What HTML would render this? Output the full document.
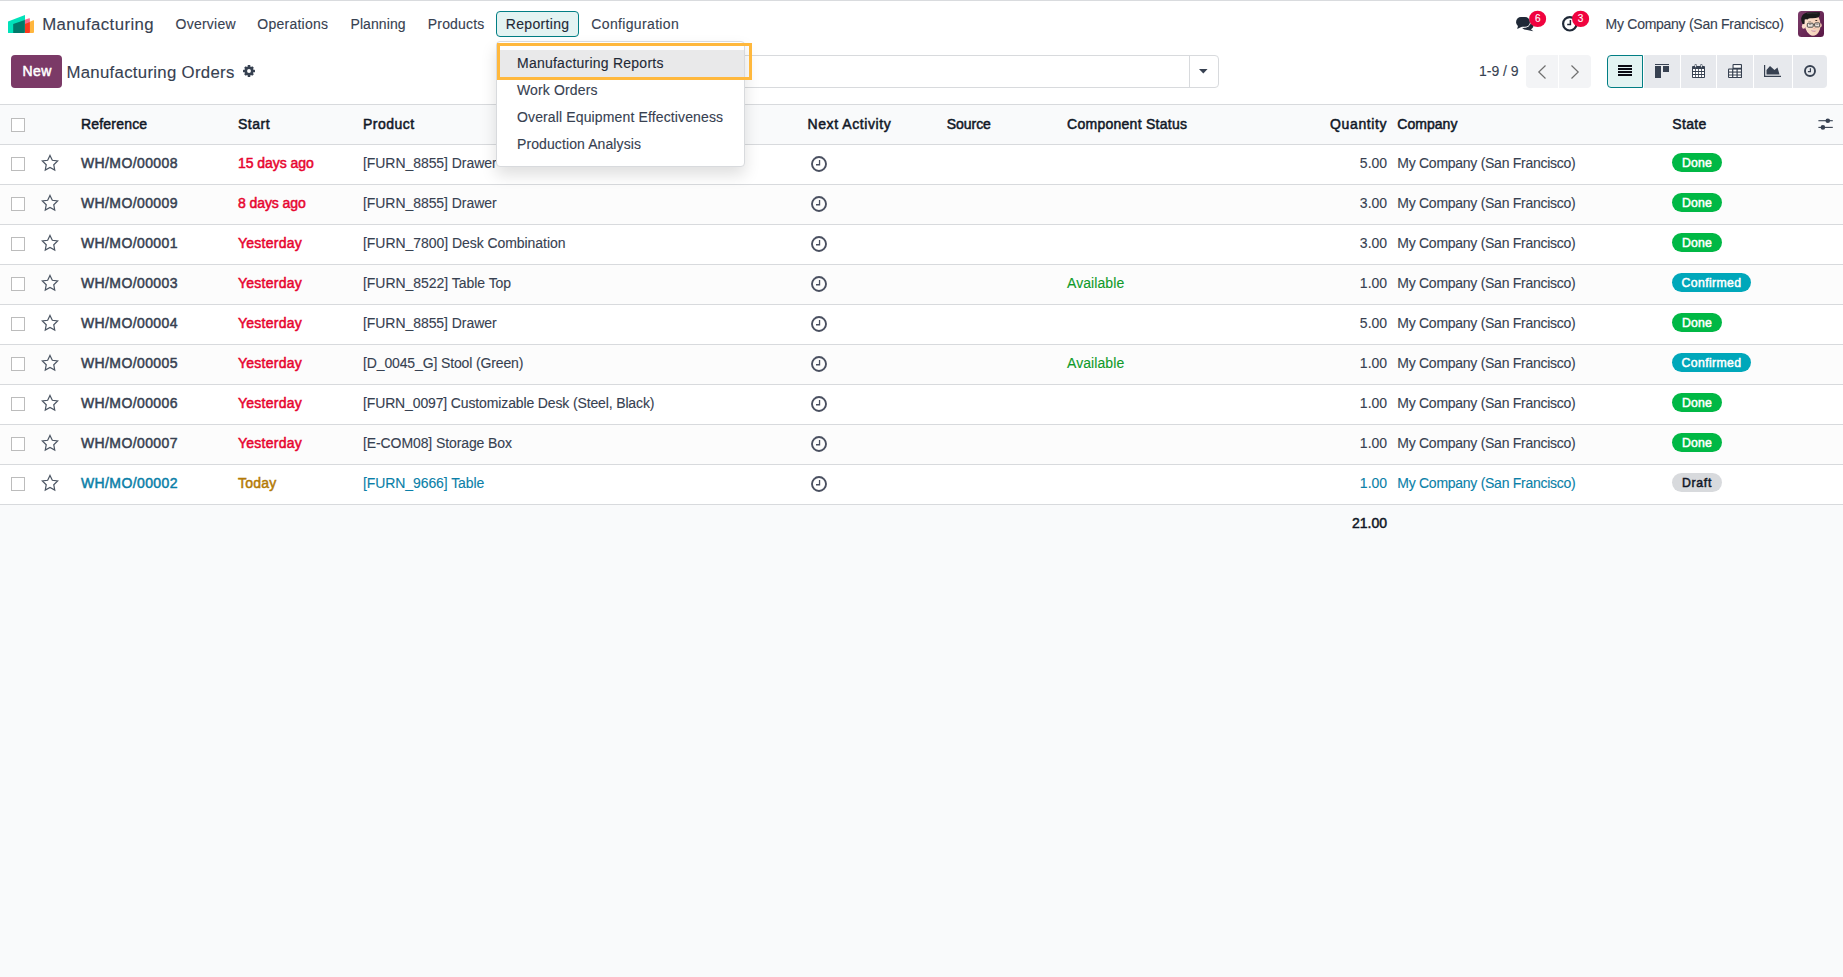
<!DOCTYPE html>
<html lang="en"><head><meta charset="utf-8"><title>Odoo - Manufacturing Orders</title>
<style>
*{box-sizing:border-box;margin:0;padding:0}
html,body{width:1843px;height:977px;overflow:hidden}
body{position:relative;background:#f9fafb;font-family:"Liberation Sans",sans-serif;font-size:14px;color:#374151}
.a{position:absolute}
.t{position:absolute;white-space:pre;line-height:1;z-index:5}
#top{left:0;top:0;width:1843px;height:104px;background:#fff}
#topline{left:0;top:0;width:1843px;height:1px;background:#d9dbde}
#cpline{left:0;top:104px;width:1843px;height:1px;background:#d8dadd}
.row{left:0;width:1843px;height:40px;border-bottom:1px solid #d8dadd;background:#fff}
.row.alt{background:#fcfcfc}
.row.head{background:#f9fafb}
.cb{left:11px;width:14px;height:14px;border:1px solid #bcbcbc;background:#fff}
.badge{left:1672px;height:19px;border-radius:10px}
.done{width:50px;background:#00b845}
.conf{width:79px;background:#00a7ba}
.draft{width:50px;background:#d8dadd}
#new{left:11px;top:55px;width:51px;height:33px;border-radius:4px;background:#7b3a67}
#rep{left:496px;top:11px;width:83px;height:26px;border:1px solid #017e84;border-radius:4px;background:#e3f3f2}
#search{left:620px;top:55px;width:599px;height:33px;border:1px solid #d8dadd;border-radius:4px;background:#fff}
#searchsep{left:1189px;top:56px;width:1px;height:31px;background:#d8dadd}
#dd{left:496px;top:41px;width:249px;height:126px;background:#fff;border:1px solid #d8dadd;border-radius:4px;box-shadow:0 8px 16px rgba(0,0,0,.13);z-index:20}
#ddsel{left:497px;top:50px;width:247px;height:27px;background:#e9e9ea;z-index:21}
#ddhl{left:497px;top:43px;width:255px;height:37px;border:3px solid #ffb83d;z-index:25}
.pg{top:55px;height:33px;background:#f3f4f6}
.vb{top:55px;height:33px;background:#e7e9ed}
#vb1{left:1607px;width:36px;background:#e3f3f2;border:1px solid #017e84;border-radius:4px 0 0 4px}
.bdg{width:17px;height:17px;border-radius:50%;background:#f0033f;top:10.5px}
svg{position:absolute;overflow:visible}

</style></head>
<body>
<div class="a" id="top"></div><div class="a" id="topline"></div><div class="a" id="cpline"></div>
<svg style="left:8px;top:15px" width="26" height="18" viewBox="0 0 26 18"><path d="M0 6.6L17 0V18H.6Q0 18 0 17.4Z" fill="#02e2ba"/><path d="M16.8 4.7L21.2 3.2Q21.9 3 21.9 3.8V18H16.8Z" fill="#fc6b8f"/><path d="M21.9 6.7L25.3 5.3Q26 5 26 5.8V17Q26 18 25 18H21.9Z" fill="#ffb63d"/><path d="M16.8 9L21.9 7V17Q21.9 18 20.9 18H16.8Z" fill="#fc391d"/><path d="M5.2 8.9L16.8 5V16.8Q16.8 18 15.6 18H5.2Z" fill="#01796a"/></svg>
<div class="a" id="rep"></div>
<div class="a" id="new"></div>
<svg style="left:243px;top:65px" width="12" height="12" viewBox="0 0 12 12"><g fill="#374151"><circle cx="6" cy="6" r="4.55"/><rect x="4.7" y="0" width="2.6" height="12" rx=".5"/><rect x="4.7" y="0.3" width="2.6" height="11.4" rx=".5" transform="rotate(45 6 6)"/><rect x="4.7" y="0" width="2.6" height="12" rx=".5" transform="rotate(90 6 6)"/><rect x="4.7" y="0.3" width="2.6" height="11.4" rx=".5" transform="rotate(135 6 6)"/></g><circle cx="6" cy="6" r="1.95" fill="#fff"/></svg>
<div class="a" id="search"></div><div class="a" id="searchsep"></div>
<svg style="left:1199.4px;top:69px" width="8.6" height="4.6" viewBox="0 0 8.6 4.6"><polygon points="0,0 8.6,0 4.3,4.6" fill="#374151"/></svg>
<div class="a pg" style="left:1526px;width:32px;border-radius:4px 0 0 4px"></div><div class="a pg" style="left:1559px;width:32px;border-radius:0 4px 4px 0"></div>
<svg style="left:1538px;top:65px" width="8" height="14" viewBox="0 0 8 14"><polyline points="7.5,0.5 0.8,7 7.5,13.5" fill="none" stroke="#6f6f6f" stroke-width="1.2"/></svg>
<svg style="left:1571px;top:65px" width="8" height="14" viewBox="0 0 8 14"><polyline points="0.5,0.5 7.2,7 0.5,13.5" fill="none" stroke="#6f6f6f" stroke-width="1.2"/></svg>
<div class="a vb" id="vb1"></div>
<div class="a vb" style="left:1644px;width:36px;"></div>
<div class="a vb" style="left:1681px;width:35px;"></div>
<div class="a vb" style="left:1717px;width:36px;"></div>
<div class="a vb" style="left:1754px;width:38px;"></div>
<div class="a vb" style="left:1793px;width:34px;border-radius:0 4px 4px 0;"></div>
<svg style="left:1618px;top:65px" width="14" height="11" viewBox="0 0 14 11"><g fill="#0b0b14"><rect y="0" width="14" height="2"/><rect y="3" width="14" height="2"/><rect y="6" width="14" height="2"/><rect y="9" width="14" height="2"/></g></svg>
<svg style="left:1655px;top:64px" width="14" height="14" viewBox="0 0 14 14"><g fill="#374151"><rect y="0" width="14" height="1"/><rect y="2" width="6" height="12"/><rect x="8" y="2" width="6" height="6"/></g></svg>
<svg style="left:1692px;top:64px" width="13" height="14" viewBox="0 0 13 14"><g fill="#374151"><rect x="0" y="2" width="13" height="12" rx="1"/><rect x="2.6" y="0" width="2" height="4" rx="1"/><rect x="8.4" y="0" width="2" height="4" rx="1"/></g><g fill="#fff"><rect x="1" y="5" width="2.2" height="2"/><rect x="4" y="5" width="2.2" height="2"/><rect x="7" y="5" width="2.2" height="2"/><rect x="10" y="5" width="2" height="2"/><rect x="1" y="8" width="2.2" height="2"/><rect x="4" y="8" width="2.2" height="2"/><rect x="7" y="8" width="2.2" height="2"/><rect x="10" y="8" width="2" height="2"/><rect x="1" y="11" width="2.2" height="2"/><rect x="4" y="11" width="2.2" height="2"/><rect x="7" y="11" width="2.2" height="2"/><rect x="10" y="11" width="2" height="2"/></g><g fill="#e7e9ed"><rect x="3.1" y="0.6" width="1" height="2.6" rx=".5"/><rect x="8.9" y="0.6" width="1" height="2.6" rx=".5"/></g></svg>
<svg style="left:1728px;top:64px" width="14" height="14" viewBox="0 0 14 14"><g fill="#374151"><rect x="4.5" y="0" width="9.5" height="14" rx="1"/><rect x="0" y="4.5" width="14" height="9.5" rx="1"/></g><g fill="#fff"><rect x="5.6" y="1.1" width="7.3" height="2.6"/><rect x="1.1" y="5.6" width="3" height="1.9"/><rect x="5.3" y="5.6" width="3.2" height="1.9"/><rect x="9.7" y="5.6" width="3.2" height="1.9"/><rect x="1.1" y="8.6" width="3" height="1.9"/><rect x="5.3" y="8.6" width="3.2" height="1.9"/><rect x="9.7" y="8.6" width="3.2" height="1.9"/><rect x="1.1" y="11.5" width="3" height="1.5"/><rect x="5.3" y="11.5" width="3.2" height="1.5"/><rect x="9.7" y="11.5" width="3.2" height="1.5"/></g></svg>
<svg style="left:1764px;top:65px" width="17" height="12" viewBox="0 0 17 12"><g fill="#374151"><polygon points="0,0 1.2,0 1.2,10.8 17,10.8 17,12 0,12"/><polygon points="2.5,9.5 2.5,5 6,1 10.5,5 13.5,2.5 15.5,9.5"/></g></svg>
<svg style="left:1804px;top:65px" width="12" height="12" viewBox="0 0 12 12"><circle cx="6" cy="6" r="5" fill="none" stroke="#374151" stroke-width="1.9"/><path d="M6.4 3.2V6.6H3.9" fill="none" stroke="#374151" stroke-width="1.2"/></svg>
<svg style="left:1516px;top:16.8px" width="18" height="14.4" viewBox="0 0 18 14.4"><g fill="#1f2937"><ellipse cx="11.4" cy="8.4" rx="6.2" ry="4.6"/><polygon points="14,11.6 17.3,14.2 11.2,12.9"/><ellipse cx="7.1" cy="5.1" rx="7.9" ry="5.9" fill="#fff"/><rect x="0.1" y="0.1" width="13.8" height="9.7" rx="4.85" ry="4.6"/><polygon points="2.2,7.8 1.2,11.9 6.4,9.6"/></g></svg>
<svg style="left:1561.8px;top:15.5px" width="15.6" height="15.6" viewBox="0 0 15.6 15.6"><circle cx="7.8" cy="7.8" r="6.7" fill="none" stroke="#1f2937" stroke-width="2.2"/><path d="M8.4 4V8.6H5.2" fill="none" stroke="#1f2937" stroke-width="1.5"/></svg>
<svg style="left:1520px;top:5px" width="80" height="30" viewBox="0 0 80 30"><ellipse cx="17.65" cy="13.9" rx="8.5" ry="8.2" fill="#f0033f"/><ellipse cx="60.6" cy="13.9" rx="8.55" ry="8.2" fill="#f0033f"/></svg>
<svg style="left:1798px;top:11px" width="26" height="26" viewBox="0 0 26 26"><defs><linearGradient id="ag" x1="0" y1="0" x2="1" y2="1"><stop offset="0" stop-color="#7c3d6b"/><stop offset="1" stop-color="#591745"/></linearGradient><linearGradient id="sk" x1="0" y1="0" x2="1" y2="0"><stop offset="0" stop-color="#fbe3d0"/><stop offset="1" stop-color="#f3cdb4"/></linearGradient><clipPath id="ac"><rect width="26" height="26" rx="3.5"/></clipPath></defs><g clip-path="url(#ac)"><rect width="26" height="26" fill="url(#ag)"/><path d="M6.4 7.5L20.6 6Q22.6 10 22.6 15Q21.9 20.5 18.6 23.6Q14.8 26 11.6 23.6Q8.4 20.6 7.6 17.8L6.2 13Z" fill="url(#sk)"/><ellipse cx="5.6" cy="15.2" rx="1.7" ry="2.6" fill="#fadccb"/><ellipse cx="22.7" cy="14.2" rx="1" ry="2" fill="#efc5ae"/><path d="M4.9 13.2Q2.2 9 3.6 6Q5 2.6 9 1.6Q15 .6 21.9 1.2Q22.6 3.6 20.6 6.3Q17 7.6 12.5 7.3Q10.5 7.4 9.5 8.4Q7.6 8 6.6 8.6L6.5 12.8Z" fill="#19191b"/><path d="M9 2.6Q14 1.6 19.5 2.2" stroke="#3c3c40" stroke-width=".7" fill="none"/><rect x="17.2" y="9" width="2.2" height=".9" rx=".4" fill="#3a2a22"/><rect x="10.2" y="10.2" width="3" height=".8" rx=".4" fill="#a89484"/><rect x="9.3" y="12.2" width="5.9" height="4" rx=".9" fill="#ece6e0" stroke="#4b4a47" stroke-width="1"/><rect x="16.7" y="11.9" width="5" height="4" rx=".9" fill="#efe4de" stroke="#4b4a47" stroke-width="1"/><path d="M15.2 13.4H16.7" stroke="#4b4a47" stroke-width=".9"/><path d="M11 13.6H13.4M18.2 13.4H20.4" stroke="#8d857d" stroke-width=".9"/><ellipse cx="16.4" cy="17.3" rx="1.2" ry=".6" fill="#f0b3a4"/><path d="M13 19.1Q15.6 19.9 18.3 18.9Q17.6 21 15.6 21Q13.8 21 13 19.1Z" fill="#c2657a"/><path d="M13.3 19.2Q15.6 19.9 18 19L17.6 20.1Q15.6 20.7 13.8 20.2Z" fill="#ebe6e6"/></g></svg>
<div class="a row head" style="top:105px"></div>
<div class="a row" style="top:145px"></div>
<div class="a row alt" style="top:185px"></div>
<div class="a row" style="top:225px"></div>
<div class="a row alt" style="top:265px"></div>
<div class="a row" style="top:305px"></div>
<div class="a row alt" style="top:345px"></div>
<div class="a row" style="top:385px"></div>
<div class="a row alt" style="top:425px"></div>
<div class="a row" style="top:465px"></div>
<div class="a cb" style="top:118px"></div>
<div class="a cb" style="top:157px"></div>
<svg style="left:41px;top:153.9px" width="18" height="18" viewBox="0 0 18 18"><polygon points="9.00,1.45 11.32,6.30 16.66,7.01 12.76,10.72 13.73,16.01 9.00,13.45 4.27,16.01 5.24,10.72 1.34,7.01 6.68,6.30" fill="none" stroke="#4b5563" stroke-width="1.2" stroke-linejoin="miter" stroke-miterlimit="10"/></svg>
<svg style="left:811.15px;top:155.8px" width="16" height="16" viewBox="0 0 16 16"><circle cx="8" cy="8" r="7" fill="none" stroke="#4a5060" stroke-width="1.9"/><path d="M8.55 3.9V8.75H5" fill="none" stroke="#4a5060" stroke-width="1.3"/></svg>
<div class="a badge done" style="top:153px"></div>
<div class="a cb" style="top:197px"></div>
<svg style="left:41px;top:193.9px" width="18" height="18" viewBox="0 0 18 18"><polygon points="9.00,1.45 11.32,6.30 16.66,7.01 12.76,10.72 13.73,16.01 9.00,13.45 4.27,16.01 5.24,10.72 1.34,7.01 6.68,6.30" fill="none" stroke="#4b5563" stroke-width="1.2" stroke-linejoin="miter" stroke-miterlimit="10"/></svg>
<svg style="left:811.15px;top:195.8px" width="16" height="16" viewBox="0 0 16 16"><circle cx="8" cy="8" r="7" fill="none" stroke="#4a5060" stroke-width="1.9"/><path d="M8.55 3.9V8.75H5" fill="none" stroke="#4a5060" stroke-width="1.3"/></svg>
<div class="a badge done" style="top:193px"></div>
<div class="a cb" style="top:237px"></div>
<svg style="left:41px;top:233.9px" width="18" height="18" viewBox="0 0 18 18"><polygon points="9.00,1.45 11.32,6.30 16.66,7.01 12.76,10.72 13.73,16.01 9.00,13.45 4.27,16.01 5.24,10.72 1.34,7.01 6.68,6.30" fill="none" stroke="#4b5563" stroke-width="1.2" stroke-linejoin="miter" stroke-miterlimit="10"/></svg>
<svg style="left:811.15px;top:235.8px" width="16" height="16" viewBox="0 0 16 16"><circle cx="8" cy="8" r="7" fill="none" stroke="#4a5060" stroke-width="1.9"/><path d="M8.55 3.9V8.75H5" fill="none" stroke="#4a5060" stroke-width="1.3"/></svg>
<div class="a badge done" style="top:233px"></div>
<div class="a cb" style="top:277px"></div>
<svg style="left:41px;top:273.9px" width="18" height="18" viewBox="0 0 18 18"><polygon points="9.00,1.45 11.32,6.30 16.66,7.01 12.76,10.72 13.73,16.01 9.00,13.45 4.27,16.01 5.24,10.72 1.34,7.01 6.68,6.30" fill="none" stroke="#4b5563" stroke-width="1.2" stroke-linejoin="miter" stroke-miterlimit="10"/></svg>
<svg style="left:811.15px;top:275.8px" width="16" height="16" viewBox="0 0 16 16"><circle cx="8" cy="8" r="7" fill="none" stroke="#4a5060" stroke-width="1.9"/><path d="M8.55 3.9V8.75H5" fill="none" stroke="#4a5060" stroke-width="1.3"/></svg>
<div class="a badge conf" style="top:273px"></div>
<div class="a cb" style="top:317px"></div>
<svg style="left:41px;top:313.9px" width="18" height="18" viewBox="0 0 18 18"><polygon points="9.00,1.45 11.32,6.30 16.66,7.01 12.76,10.72 13.73,16.01 9.00,13.45 4.27,16.01 5.24,10.72 1.34,7.01 6.68,6.30" fill="none" stroke="#4b5563" stroke-width="1.2" stroke-linejoin="miter" stroke-miterlimit="10"/></svg>
<svg style="left:811.15px;top:315.8px" width="16" height="16" viewBox="0 0 16 16"><circle cx="8" cy="8" r="7" fill="none" stroke="#4a5060" stroke-width="1.9"/><path d="M8.55 3.9V8.75H5" fill="none" stroke="#4a5060" stroke-width="1.3"/></svg>
<div class="a badge done" style="top:313px"></div>
<div class="a cb" style="top:357px"></div>
<svg style="left:41px;top:353.9px" width="18" height="18" viewBox="0 0 18 18"><polygon points="9.00,1.45 11.32,6.30 16.66,7.01 12.76,10.72 13.73,16.01 9.00,13.45 4.27,16.01 5.24,10.72 1.34,7.01 6.68,6.30" fill="none" stroke="#4b5563" stroke-width="1.2" stroke-linejoin="miter" stroke-miterlimit="10"/></svg>
<svg style="left:811.15px;top:355.8px" width="16" height="16" viewBox="0 0 16 16"><circle cx="8" cy="8" r="7" fill="none" stroke="#4a5060" stroke-width="1.9"/><path d="M8.55 3.9V8.75H5" fill="none" stroke="#4a5060" stroke-width="1.3"/></svg>
<div class="a badge conf" style="top:353px"></div>
<div class="a cb" style="top:397px"></div>
<svg style="left:41px;top:393.9px" width="18" height="18" viewBox="0 0 18 18"><polygon points="9.00,1.45 11.32,6.30 16.66,7.01 12.76,10.72 13.73,16.01 9.00,13.45 4.27,16.01 5.24,10.72 1.34,7.01 6.68,6.30" fill="none" stroke="#4b5563" stroke-width="1.2" stroke-linejoin="miter" stroke-miterlimit="10"/></svg>
<svg style="left:811.15px;top:395.8px" width="16" height="16" viewBox="0 0 16 16"><circle cx="8" cy="8" r="7" fill="none" stroke="#4a5060" stroke-width="1.9"/><path d="M8.55 3.9V8.75H5" fill="none" stroke="#4a5060" stroke-width="1.3"/></svg>
<div class="a badge done" style="top:393px"></div>
<div class="a cb" style="top:437px"></div>
<svg style="left:41px;top:433.9px" width="18" height="18" viewBox="0 0 18 18"><polygon points="9.00,1.45 11.32,6.30 16.66,7.01 12.76,10.72 13.73,16.01 9.00,13.45 4.27,16.01 5.24,10.72 1.34,7.01 6.68,6.30" fill="none" stroke="#4b5563" stroke-width="1.2" stroke-linejoin="miter" stroke-miterlimit="10"/></svg>
<svg style="left:811.15px;top:435.8px" width="16" height="16" viewBox="0 0 16 16"><circle cx="8" cy="8" r="7" fill="none" stroke="#4a5060" stroke-width="1.9"/><path d="M8.55 3.9V8.75H5" fill="none" stroke="#4a5060" stroke-width="1.3"/></svg>
<div class="a badge done" style="top:433px"></div>
<div class="a cb" style="top:477px"></div>
<svg style="left:41px;top:473.9px" width="18" height="18" viewBox="0 0 18 18"><polygon points="9.00,1.45 11.32,6.30 16.66,7.01 12.76,10.72 13.73,16.01 9.00,13.45 4.27,16.01 5.24,10.72 1.34,7.01 6.68,6.30" fill="none" stroke="#4b5563" stroke-width="1.2" stroke-linejoin="miter" stroke-miterlimit="10"/></svg>
<svg style="left:811.15px;top:475.8px" width="16" height="16" viewBox="0 0 16 16"><circle cx="8" cy="8" r="7" fill="none" stroke="#4a5060" stroke-width="1.9"/><path d="M8.55 3.9V8.75H5" fill="none" stroke="#4a5060" stroke-width="1.3"/></svg>
<div class="a badge draft" style="top:473px"></div>
<svg style="left:1818px;top:118px" width="15" height="12" viewBox="0 0 15 12"><g stroke="#374151" stroke-width="1.1"><line x1="0.4" y1="2.7" x2="14.8" y2="2.7"/><line x1="0.4" y1="9.4" x2="14.8" y2="9.4"/></g><circle cx="9.8" cy="2.7" r="2.3" fill="#374151"/><circle cx="4.9" cy="9.4" r="2.3" fill="#374151"/></svg>
<div class="a" id="dd"></div><div class="a" id="ddsel"></div><div class="a" id="ddhl"></div>
<nav class="o_main_navbar">
<span class="t" style="left:42.20px;top:17px;font-size:16.8px;color:#374151;letter-spacing:0.429px;-webkit-text-stroke:0.12px #374151;">Manufacturing</span>
<span class="t" style="left:175.50px;top:17px;font-size:14px;color:#374151;letter-spacing:0.245px;-webkit-text-stroke:0.12px #374151;">Overview</span>
<span class="t" style="left:257.30px;top:17px;font-size:14px;color:#374151;letter-spacing:0.252px;-webkit-text-stroke:0.12px #374151;">Operations</span>
<span class="t" style="left:350.50px;top:17px;font-size:14px;color:#374151;letter-spacing:0.080px;-webkit-text-stroke:0.12px #374151;">Planning</span>
<span class="t" style="left:427.80px;top:17px;font-size:14px;color:#374151;letter-spacing:0.167px;-webkit-text-stroke:0.12px #374151;">Products</span>
<span class="t" style="left:505.80px;top:17px;font-size:14px;color:#1f2937;letter-spacing:0.318px;-webkit-text-stroke:0.12px #1f2937;">Reporting</span>
<span class="t" style="left:591.30px;top:17px;font-size:14px;color:#374151;letter-spacing:0.348px;-webkit-text-stroke:0.12px #374151;">Configuration</span>
<span class="t" style="left:1605.60px;top:17px;font-size:14px;color:#374151;letter-spacing:-0.272px;-webkit-text-stroke:0.12px #374151;">My Company (San Francisco)</span>
<span class="t" style="left:1534.91px;top:14px;font-size:10px;color:#fff;letter-spacing:0.123px;-webkit-text-stroke:0.12px #fff;">6</span>
<span class="t" style="left:1577.81px;top:14px;font-size:10px;color:#fff;letter-spacing:0.123px;-webkit-text-stroke:0.12px #fff;">3</span>
</nav>
<header class="o_control_panel">
<span class="t" style="left:22.50px;top:64px;font-size:14px;color:#ffffff;letter-spacing:0.395px;-webkit-text-stroke:0.5px #ffffff;">New</span>
<span class="t" style="left:66.40px;top:65px;font-size:16.8px;color:#374151;letter-spacing:0.300px;-webkit-text-stroke:0.12px #374151;">Manufacturing Orders</span>
<span class="t" style="left:1479.00px;top:64px;font-size:14px;color:#374151;letter-spacing:-0.011px;-webkit-text-stroke:0.12px #374151;">1-9 / 9</span>
</header>
<div class="dropdown-menu" role="menu">
<span class="t" style="left:517.00px;top:56px;font-size:14px;color:#1f2937;letter-spacing:0.240px;-webkit-text-stroke:0.12px #1f2937;z-index:30;">Manufacturing Reports</span>
<span class="t" style="left:517.00px;top:83px;font-size:14px;color:#374151;letter-spacing:0.138px;-webkit-text-stroke:0.12px #374151;z-index:30;">Work Orders</span>
<span class="t" style="left:517.00px;top:110px;font-size:14px;color:#374151;letter-spacing:0.134px;-webkit-text-stroke:0.12px #374151;z-index:30;">Overall Equipment Effectiveness</span>
<span class="t" style="left:517.00px;top:137px;font-size:14px;color:#374151;letter-spacing:0.100px;-webkit-text-stroke:0.12px #374151;z-index:30;">Production Analysis</span>
</div>
<main class="o_list_view" role="table">
<div class="o_list_header" role="row">
<span class="t" style="left:81.00px;top:117px;font-size:14px;color:#111827;letter-spacing:0.190px;-webkit-text-stroke:0.5px #111827;">Reference</span>
<span class="t" style="left:238.00px;top:117px;font-size:14px;color:#111827;letter-spacing:0.507px;-webkit-text-stroke:0.5px #111827;">Start</span>
<span class="t" style="left:363.00px;top:117px;font-size:14px;color:#111827;letter-spacing:0.462px;-webkit-text-stroke:0.5px #111827;">Product</span>
<span class="t" style="left:807.50px;top:117px;font-size:14px;color:#111827;letter-spacing:0.587px;-webkit-text-stroke:0.5px #111827;">Next Activity</span>
<span class="t" style="left:946.70px;top:117px;font-size:14px;color:#111827;letter-spacing:-0.033px;-webkit-text-stroke:0.5px #111827;">Source</span>
<span class="t" style="left:1067.00px;top:117px;font-size:14px;color:#111827;letter-spacing:0.273px;-webkit-text-stroke:0.5px #111827;">Component Status</span>
<span class="t" style="left:1397.30px;top:117px;font-size:14px;color:#111827;letter-spacing:0.032px;-webkit-text-stroke:0.5px #111827;">Company</span>
<span class="t" style="left:1672.30px;top:117px;font-size:14px;color:#111827;letter-spacing:0.336px;-webkit-text-stroke:0.5px #111827;">State</span>
<span class="t" style="left:1330.07px;top:117px;font-size:14px;color:#111827;letter-spacing:0.623px;-webkit-text-stroke:0.5px #111827;">Quantity</span>
</div>
<div class="o_data_row" role="row">
<span class="t" style="left:81.00px;top:156px;font-size:14px;color:#374151;letter-spacing:0.385px;-webkit-text-stroke:0.5px #374151;">WH/MO/00008</span>
<span class="t" style="left:238.00px;top:156px;font-size:14px;color:#e7052f;letter-spacing:-0.058px;-webkit-text-stroke:0.5px #e7052f;">15 days ago</span>
<span class="t" style="left:363.00px;top:156px;font-size:14px;color:#374151;letter-spacing:-0.061px;-webkit-text-stroke:0.12px #374151;">[FURN_8855] Drawer</span>
<span class="t" style="left:1359.84px;top:156px;font-size:14px;color:#374151;letter-spacing:0.027px;-webkit-text-stroke:0.12px #374151;">5.00</span>
<span class="t" style="left:1397.30px;top:156px;font-size:14px;color:#374151;letter-spacing:-0.272px;-webkit-text-stroke:0.12px #374151;">My Company (San Francisco)</span>
<span class="t" style="left:1681.89px;top:157px;font-size:12.25px;color:#fff;letter-spacing:0.232px;-webkit-text-stroke:0.5px #fff;">Done</span>
</div>
<div class="o_data_row" role="row">
<span class="t" style="left:81.00px;top:196px;font-size:14px;color:#374151;letter-spacing:0.385px;-webkit-text-stroke:0.5px #374151;">WH/MO/00009</span>
<span class="t" style="left:238.00px;top:196px;font-size:14px;color:#e7052f;letter-spacing:-0.079px;-webkit-text-stroke:0.5px #e7052f;">8 days ago</span>
<span class="t" style="left:363.00px;top:196px;font-size:14px;color:#374151;letter-spacing:-0.061px;-webkit-text-stroke:0.12px #374151;">[FURN_8855] Drawer</span>
<span class="t" style="left:1359.84px;top:196px;font-size:14px;color:#374151;letter-spacing:0.027px;-webkit-text-stroke:0.12px #374151;">3.00</span>
<span class="t" style="left:1397.30px;top:196px;font-size:14px;color:#374151;letter-spacing:-0.272px;-webkit-text-stroke:0.12px #374151;">My Company (San Francisco)</span>
<span class="t" style="left:1681.89px;top:197px;font-size:12.25px;color:#fff;letter-spacing:0.232px;-webkit-text-stroke:0.5px #fff;">Done</span>
</div>
<div class="o_data_row" role="row">
<span class="t" style="left:81.00px;top:236px;font-size:14px;color:#374151;letter-spacing:0.385px;-webkit-text-stroke:0.5px #374151;">WH/MO/00001</span>
<span class="t" style="left:238.00px;top:236px;font-size:14px;color:#e7052f;letter-spacing:0.242px;-webkit-text-stroke:0.5px #e7052f;">Yesterday</span>
<span class="t" style="left:363.00px;top:236px;font-size:14px;color:#374151;letter-spacing:-0.050px;-webkit-text-stroke:0.12px #374151;">[FURN_7800] Desk Combination</span>
<span class="t" style="left:1359.84px;top:236px;font-size:14px;color:#374151;letter-spacing:0.027px;-webkit-text-stroke:0.12px #374151;">3.00</span>
<span class="t" style="left:1397.30px;top:236px;font-size:14px;color:#374151;letter-spacing:-0.272px;-webkit-text-stroke:0.12px #374151;">My Company (San Francisco)</span>
<span class="t" style="left:1681.89px;top:237px;font-size:12.25px;color:#fff;letter-spacing:0.232px;-webkit-text-stroke:0.5px #fff;">Done</span>
</div>
<div class="o_data_row" role="row">
<span class="t" style="left:81.00px;top:276px;font-size:14px;color:#374151;letter-spacing:0.385px;-webkit-text-stroke:0.5px #374151;">WH/MO/00003</span>
<span class="t" style="left:238.00px;top:276px;font-size:14px;color:#e7052f;letter-spacing:0.242px;-webkit-text-stroke:0.5px #e7052f;">Yesterday</span>
<span class="t" style="left:363.00px;top:276px;font-size:14px;color:#374151;letter-spacing:-0.039px;-webkit-text-stroke:0.12px #374151;">[FURN_8522] Table Top</span>
<span class="t" style="left:1067.00px;top:276px;font-size:14px;color:#0f9a2a;letter-spacing:0.078px;-webkit-text-stroke:0.12px #0f9a2a;">Available</span>
<span class="t" style="left:1359.84px;top:276px;font-size:14px;color:#374151;letter-spacing:0.027px;-webkit-text-stroke:0.12px #374151;">1.00</span>
<span class="t" style="left:1397.30px;top:276px;font-size:14px;color:#374151;letter-spacing:-0.272px;-webkit-text-stroke:0.12px #374151;">My Company (San Francisco)</span>
<span class="t" style="left:1681.56px;top:277px;font-size:12.25px;color:#fff;letter-spacing:0.374px;-webkit-text-stroke:0.5px #fff;">Confirmed</span>
</div>
<div class="o_data_row" role="row">
<span class="t" style="left:81.00px;top:316px;font-size:14px;color:#374151;letter-spacing:0.385px;-webkit-text-stroke:0.5px #374151;">WH/MO/00004</span>
<span class="t" style="left:238.00px;top:316px;font-size:14px;color:#e7052f;letter-spacing:0.242px;-webkit-text-stroke:0.5px #e7052f;">Yesterday</span>
<span class="t" style="left:363.00px;top:316px;font-size:14px;color:#374151;letter-spacing:-0.061px;-webkit-text-stroke:0.12px #374151;">[FURN_8855] Drawer</span>
<span class="t" style="left:1359.84px;top:316px;font-size:14px;color:#374151;letter-spacing:0.027px;-webkit-text-stroke:0.12px #374151;">5.00</span>
<span class="t" style="left:1397.30px;top:316px;font-size:14px;color:#374151;letter-spacing:-0.272px;-webkit-text-stroke:0.12px #374151;">My Company (San Francisco)</span>
<span class="t" style="left:1681.89px;top:317px;font-size:12.25px;color:#fff;letter-spacing:0.232px;-webkit-text-stroke:0.5px #fff;">Done</span>
</div>
<div class="o_data_row" role="row">
<span class="t" style="left:81.00px;top:356px;font-size:14px;color:#374151;letter-spacing:0.385px;-webkit-text-stroke:0.5px #374151;">WH/MO/00005</span>
<span class="t" style="left:238.00px;top:356px;font-size:14px;color:#e7052f;letter-spacing:0.242px;-webkit-text-stroke:0.5px #e7052f;">Yesterday</span>
<span class="t" style="left:363.00px;top:356px;font-size:14px;color:#374151;letter-spacing:-0.131px;-webkit-text-stroke:0.12px #374151;">[D_0045_G] Stool (Green)</span>
<span class="t" style="left:1067.00px;top:356px;font-size:14px;color:#0f9a2a;letter-spacing:0.078px;-webkit-text-stroke:0.12px #0f9a2a;">Available</span>
<span class="t" style="left:1359.84px;top:356px;font-size:14px;color:#374151;letter-spacing:0.027px;-webkit-text-stroke:0.12px #374151;">1.00</span>
<span class="t" style="left:1397.30px;top:356px;font-size:14px;color:#374151;letter-spacing:-0.272px;-webkit-text-stroke:0.12px #374151;">My Company (San Francisco)</span>
<span class="t" style="left:1681.56px;top:357px;font-size:12.25px;color:#fff;letter-spacing:0.374px;-webkit-text-stroke:0.5px #fff;">Confirmed</span>
</div>
<div class="o_data_row" role="row">
<span class="t" style="left:81.00px;top:396px;font-size:14px;color:#374151;letter-spacing:0.385px;-webkit-text-stroke:0.5px #374151;">WH/MO/00006</span>
<span class="t" style="left:238.00px;top:396px;font-size:14px;color:#e7052f;letter-spacing:0.242px;-webkit-text-stroke:0.5px #e7052f;">Yesterday</span>
<span class="t" style="left:363.00px;top:396px;font-size:14px;color:#374151;letter-spacing:-0.135px;-webkit-text-stroke:0.12px #374151;">[FURN_0097] Customizable Desk (Steel, Black)</span>
<span class="t" style="left:1359.84px;top:396px;font-size:14px;color:#374151;letter-spacing:0.027px;-webkit-text-stroke:0.12px #374151;">1.00</span>
<span class="t" style="left:1397.30px;top:396px;font-size:14px;color:#374151;letter-spacing:-0.272px;-webkit-text-stroke:0.12px #374151;">My Company (San Francisco)</span>
<span class="t" style="left:1681.89px;top:397px;font-size:12.25px;color:#fff;letter-spacing:0.232px;-webkit-text-stroke:0.5px #fff;">Done</span>
</div>
<div class="o_data_row" role="row">
<span class="t" style="left:81.00px;top:436px;font-size:14px;color:#374151;letter-spacing:0.385px;-webkit-text-stroke:0.5px #374151;">WH/MO/00007</span>
<span class="t" style="left:238.00px;top:436px;font-size:14px;color:#e7052f;letter-spacing:0.242px;-webkit-text-stroke:0.5px #e7052f;">Yesterday</span>
<span class="t" style="left:363.00px;top:436px;font-size:14px;color:#374151;letter-spacing:-0.096px;-webkit-text-stroke:0.12px #374151;">[E-COM08] Storage Box</span>
<span class="t" style="left:1359.84px;top:436px;font-size:14px;color:#374151;letter-spacing:0.027px;-webkit-text-stroke:0.12px #374151;">1.00</span>
<span class="t" style="left:1397.30px;top:436px;font-size:14px;color:#374151;letter-spacing:-0.272px;-webkit-text-stroke:0.12px #374151;">My Company (San Francisco)</span>
<span class="t" style="left:1681.89px;top:437px;font-size:12.25px;color:#fff;letter-spacing:0.232px;-webkit-text-stroke:0.5px #fff;">Done</span>
</div>
<div class="o_data_row" role="row">
<span class="t" style="left:81.00px;top:476px;font-size:14px;color:#0b7fa8;letter-spacing:0.385px;-webkit-text-stroke:0.5px #0b7fa8;">WH/MO/00002</span>
<span class="t" style="left:238.00px;top:476px;font-size:14px;color:#b37a06;letter-spacing:0.224px;-webkit-text-stroke:0.5px #b37a06;">Today</span>
<span class="t" style="left:363.00px;top:476px;font-size:14px;color:#0b7fa8;letter-spacing:-0.090px;-webkit-text-stroke:0.12px #0b7fa8;">[FURN_9666] Table</span>
<span class="t" style="left:1359.84px;top:476px;font-size:14px;color:#0b7fa8;letter-spacing:0.027px;-webkit-text-stroke:0.12px #0b7fa8;">1.00</span>
<span class="t" style="left:1397.30px;top:476px;font-size:14px;color:#0b7fa8;letter-spacing:-0.272px;-webkit-text-stroke:0.12px #0b7fa8;">My Company (San Francisco)</span>
<span class="t" style="left:1681.96px;top:477px;font-size:12.25px;color:#111827;letter-spacing:0.707px;-webkit-text-stroke:0.5px #111827;">Draft</span>
</div>
<div class="o_list_footer" role="row">
<span class="t" style="left:1351.89px;top:516px;font-size:14px;color:#111827;letter-spacing:0.053px;-webkit-text-stroke:0.5px #111827;">21.00</span>
</div>
</main>
</body></html>
